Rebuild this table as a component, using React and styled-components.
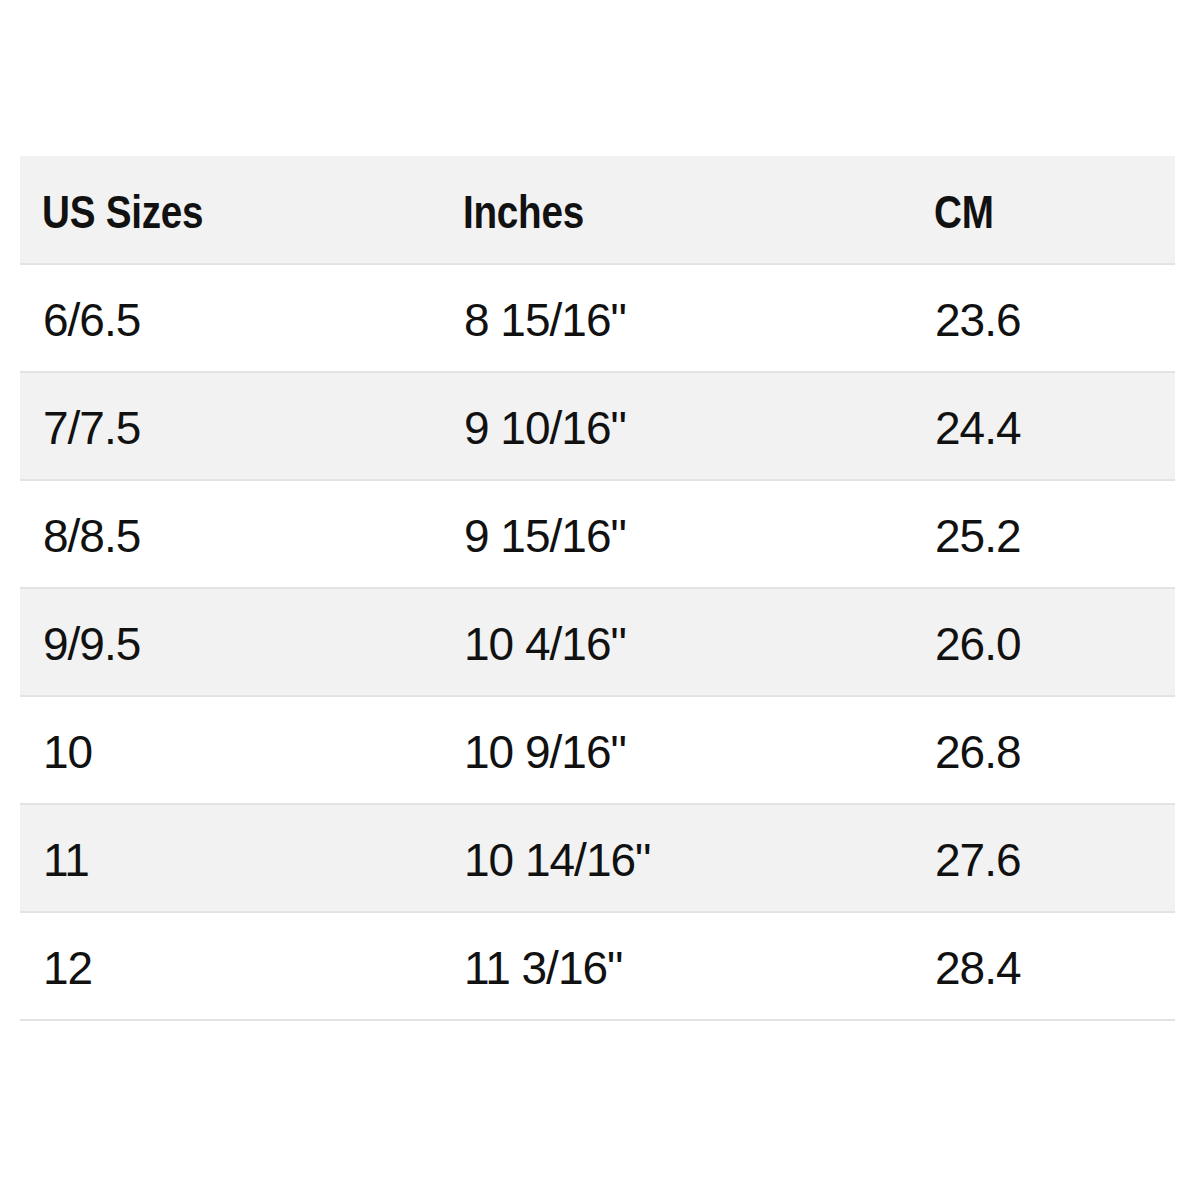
import React from "react";
import styled, { createGlobalStyle } from "styled-components";

const GlobalStyle = createGlobalStyle`
  body {
    margin: 0;
    background: #fff;
    font-family: "Liberation Sans", Arial, sans-serif;
  }
`;

const Page = styled.div`
  width: 1200px;
  height: 1200px;
  padding: 156px 25px 0 20px;
  box-sizing: border-box;
`;

const Table = styled.table`
  width: 100%;
  border-collapse: collapse;
  table-layout: fixed;
  color: #111;
`;

const Row = styled.tr`
  height: 108px;
  background: ${(p) => (p.$shade ? "#f2f2f2" : "#fff")};
  border-bottom: 2px solid #e3e3e3;
`;

const Th = styled.th`
  text-align: left;
  padding: 4px 0 0 22px;
  font-weight: 700;
  font-size: 46px;
  vertical-align: middle;
`;

/* the header face in the shot is a condensed bold */
const HeadText = styled.span`
  display: inline-block;
  transform: scaleX(0.84);
  transform-origin: left center;
  letter-spacing: -0.3px;
`;

const Td = styled.td`
  padding: 4px 0 0 23px;
  font-size: 46px;
  letter-spacing: -1px;
  vertical-align: middle;
`;

const sizes = [
  ["6/6.5", '8 15/16"', "23.6"],
  ["7/7.5", '9 10/16"', "24.4"],
  ["8/8.5", '9 15/16"', "25.2"],
  ["9/9.5", '10 4/16"', "26.0"],
  ["10", '10 9/16"', "26.8"],
  ["11", '10 14/16"', "27.6"],
  ["12", '11 3/16"', "28.4"],
];

const App = () => {
  return (
    <Page>
      <GlobalStyle />
      <Table>
        <colgroup>
          <col style={{ width: "421px" }} />
          <col style={{ width: "471px" }} />
          <col />
        </colgroup>
        <thead>
          <Row $shade>
            <Th><HeadText>US Sizes</HeadText></Th>
            <Th><HeadText>Inches</HeadText></Th>
            <Th><HeadText>CM</HeadText></Th>
          </Row>
        </thead>
        <tbody>
          {sizes.map((s, i) => (
            <Row key={s[0]} $shade={i % 2 === 1}>
              <Td>{s[0]}</Td>
              <Td>{s[1]}</Td>
              <Td>{s[2]}</Td>
            </Row>
          ))}
        </tbody>
      </Table>
    </Page>
  );
};

export default App;
